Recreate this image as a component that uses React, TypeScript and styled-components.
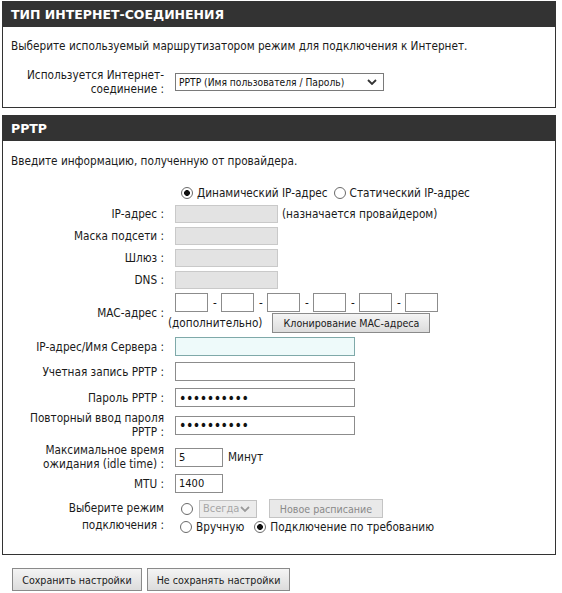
import styled, { createGlobalStyle } from "styled-components";

const GlobalStyle = createGlobalStyle`
  body {
    margin: 0;
    background: #fff;
    font-family: "DejaVu Sans", "Liberation Sans", sans-serif;
    font-stretch: condensed;
    font-size: 11.7px;
    color: #1a1a1a;
  }
`;

const Page = styled.div`
  width: 554px;
  margin: 1px 0 0 2px;
`;

const Section = styled.section<{ $gap?: number }>`
  margin-bottom: ${(p) => p.$gap ?? 0}px;
`;

const SectionTitle = styled.h2`
  margin: 0;
  height: 26px;
  padding-left: 9px;
  background: #333;
  color: #fff;
  font-family: "DejaVu Sans", sans-serif;
  font-stretch: normal;
  font-size: 12.5px;
  font-weight: bold;
  line-height: 27px;
`;

const SectionBody = styled.div<{ $pt: number; $pb: number }>`
  border: 1px solid #333;
  border-top: none;
  padding: ${(p) => p.$pt}px 0 ${(p) => p.$pb}px 0;
`;

const Intro = styled.p<{ $mb: number }>`
  margin: 0 0 ${(p) => p.$mb}px 8px;
  line-height: 14px;
`;

const Row = styled.div<{ $mt?: number }>`
  display: flex;
  align-items: center;
  margin-top: ${(p) => p.$mt ?? 4}px;
  line-height: 14px;
`;

const Label = styled.div<{ $lh?: number }>`
  width: 161px;
  flex: none;
  text-align: right;
  line-height: ${(p) => p.$lh ?? 14}px;
`;

const Field = styled.div<{ $gap?: number }>`
  margin-left: 3px;
  display: flex;
  flex-direction: column;
  gap: ${(p) => p.$gap ?? 0}px;
`;

const Line = styled.div`
  display: flex;
  align-items: center;
`;

const TextInput = styled.input<{ $w: number; $h?: number; $ml?: number; $focus?: boolean }>`
  box-sizing: border-box;
  width: ${(p) => p.$w}px;
  height: ${(p) => p.$h ?? 19}px;
  margin: 0 0 0 ${(p) => p.$ml ?? 8}px;
  padding: 0 3px;
  border: 1px solid ${(p) => (p.$focus ? "#7fa9a9" : "#8c8c8c")};
  border-radius: 0;
  background: ${(p) => (p.$focus ? "#eefafa" : "#fff")};
  font-family: "DejaVu Sans", "Liberation Sans", sans-serif;
  font-stretch: condensed;
  font-size: 11px;
  color: #111;
  outline: none;

  &:disabled {
    background: #e3e3e3;
    border-color: #c9c9c9;
  }

  &[type="password"] {
    font-size: 14px;
    letter-spacing: -0.5px;
  }
`;

const After = styled.span<{ $ml: number }>`
  margin-left: ${(p) => p.$ml}px;
  white-space: nowrap;
`;

const Dash = styled.span`
  width: 6px;
  margin-left: 4px;
  text-align: center;
`;

const SelectWrap = styled.div<{ $w: number; $h: number; $ml: number; $off?: boolean }>`
  position: relative;
  box-sizing: border-box;
  width: ${(p) => p.$w}px;
  height: ${(p) => p.$h}px;
  margin-left: ${(p) => p.$ml}px;
  border: 1px solid ${(p) => (p.$off ? "#c2c2c2" : "#7a7a7a")};
  background: ${(p) => (p.$off ? "#ececec" : "#fff")};
  color: ${(p) => (p.$off ? "#8a8a8a" : "#111")};

  svg {
    position: absolute;
    right: 6px;
    top: 50%;
    transform: translateY(-50%);
  }
`;

const Select = styled.select<{ $fs?: number }>`
  appearance: none;
  width: 100%;
  height: 100%;
  border: none;
  background: transparent;
  padding: 0 0 0 3px;
  font-family: "DejaVu Sans", "Liberation Sans", sans-serif;
  font-stretch: condensed;
  font-size: ${(p) => p.$fs ?? 10.2}px;
  color: inherit;
  outline: none;
`;

const Button = styled.button<{ $w: number; $h?: number; $ml?: number; $off?: boolean }>`
  box-sizing: border-box;
  width: ${(p) => p.$w}px;
  height: ${(p) => p.$h ?? 20}px;
  margin-left: ${(p) => p.$ml ?? 0}px;
  padding: 0;
  border: 1px solid ${(p) => (p.$off ? "#c4c4c4" : "#8a8a8a")};
  border-radius: 0;
  background: ${(p) =>
    p.$off ? "#e9e9e9" : "linear-gradient(#f4f4f4, #dcdcdc)"};
  color: ${(p) => (p.$off ? "#8a8a8a" : "#1a1a1a")};
  font-family: "DejaVu Sans", "Liberation Sans", sans-serif;
  font-stretch: condensed;
  font-size: 10.6px;
`;

const Radio = styled.input.attrs({ type: "radio" })<{ $ml?: number }>`
  appearance: none;
  box-sizing: border-box;
  width: 12px;
  height: 12px;
  margin: 0 4px 0 ${(p) => p.$ml ?? 0}px;
  border: 1px solid #6a6a6a;
  border-radius: 50%;
  background: #fff;
  flex: none;

  &:checked {
    background: radial-gradient(circle, #111 0 2.6px, #fff 3.2px);
  }
`;

const Footer = styled.div`
  display: flex;
  gap: 5px;
  margin: 13px 0 0 10px;
`;

const Chevron = ({ color }: { color: string }) => (
  <svg width="10" height="7" viewBox="0 0 10 7">
    <path d="M1 1.5 L5 5.5 L9 1.5" fill="none" stroke={color} strokeWidth="1.8" />
  </svg>
);

const macBoxes = [0, 1, 2, 3, 4, 5];

const App: React.FC = () => {
  return (
    <Page>
      <GlobalStyle />
      <Section $gap={7}>
        <SectionTitle>ТИП ИНТЕРНЕТ-СОЕДИНЕНИЯ</SectionTitle>
        <SectionBody $pt={12} $pb={11}>
          <Intro $mb={15}>
            Выберите используемый маршрутизатором режим для подключения к Интернет.
          </Intro>
          <Row $mt={0}>
            <Label>
              Используется Интернет-
              <br />
              соединение :
            </Label>
            <Field>
              <SelectWrap $w={209} $h={18} $ml={8}>
                <Select defaultValue="pptp">
                  <option value="pptp">PPTP (Имя пользователя / Пароль)</option>
                </Select>
                <Chevron color="#333" />
              </SelectWrap>
            </Field>
          </Row>
        </SectionBody>
      </Section>

      <Section>
        <SectionTitle>PPTP</SectionTitle>
        <SectionBody $pt={13} $pb={20}>
          <Intro $mb={18}>Введите информацию, полученную от провайдера.</Intro>
          <Row $mt={0}>
            <Label />
            <Field>
              <Line>
                <Radio name="iptype" defaultChecked $ml={14} />
                Динамический IP-адрес
                <Radio name="iptype" $ml={6} />
                Статический IP-адрес
              </Line>
            </Field>
          </Row>
          <Row $mt={5}>
            <Label>IP-адрес :</Label>
            <Field>
              <Line>
                <TextInput $w={103} $h={18} disabled />
                <After $ml={4}>(назначается провайдером)</After>
              </Line>
            </Field>
          </Row>
          <Row>
            <Label>Маска подсети :</Label>
            <Field>
              <TextInput $w={103} $h={18} disabled />
            </Field>
          </Row>
          <Row>
            <Label>Шлюз :</Label>
            <Field>
              <TextInput $w={103} $h={18} disabled />
            </Field>
          </Row>
          <Row>
            <Label>DNS :</Label>
            <Field>
              <TextInput $w={103} $h={18} disabled />
            </Field>
          </Row>
          <Row>
            <Label>MAC-адрес :</Label>
            <Field $gap={1}>
              <Line>
                {macBoxes.map((i) => (
                  <Line key={i}>
                    {i > 0 && <Dash>-</Dash>}
                    <TextInput $w={33} $h={19} $ml={i > 0 ? 3 : 8} />
                  </Line>
                ))}
              </Line>
              <Line>
                <After $ml={1}>(дополнительно)</After>
                <Button $w={158} $h={20} $ml={10}>
                  Клонирование MAC-адреса
                </Button>
              </Line>
            </Field>
          </Row>
          <Row>
            <Label>IP-адрес/Имя Сервера :</Label>
            <Field>
              <TextInput $w={180} $focus />
            </Field>
          </Row>
          <Row $mt={6}>
            <Label>Учетная запись PPTP :</Label>
            <Field>
              <TextInput $w={180} />
            </Field>
          </Row>
          <Row $mt={7}>
            <Label>Пароль PPTP :</Label>
            <Field>
              <TextInput $w={180} type="password" defaultValue="0123456789" />
            </Field>
          </Row>
          <Row>
            <Label>
              Повторный ввод пароля
              <br />
              PPTP :
            </Label>
            <Field>
              <TextInput $w={180} type="password" defaultValue="0123456789" />
            </Field>
          </Row>
          <Row>
            <Label>
              Максимальное время
              <br />
              ожидания (idle time) :
            </Label>
            <Field>
              <Line>
                <TextInput $w={48} defaultValue="5" />
                <After $ml={5}>Минут</After>
              </Line>
            </Field>
          </Row>
          <Row $mt={3}>
            <Label>MTU :</Label>
            <Field>
              <TextInput $w={48} defaultValue="1400" />
            </Field>
          </Row>
          <Row $mt={6}>
            <Label $lh={17}>
              Выберите режим
              <br />
              подключения :
            </Label>
            <Field $gap={2}>
              <Line>
                <Radio name="mode" $ml={14} />
                <SelectWrap $w={58} $h={18} $ml={2} $off>
                  <Select $fs={11} disabled defaultValue="always">
                    <option value="always">Всегда</option>
                  </Select>
                  <Chevron color="#9a9a9a" />
                </SelectWrap>
                <Button $w={114} $h={19} $ml={12} $off disabled>
                  Новое расписание
                </Button>
              </Line>
              <Line>
                <Radio name="mode" $ml={13} />
                Вручную
                <Radio name="mode" defaultChecked $ml={10} />
                Подключение по требованию
              </Line>
            </Field>
          </Row>
        </SectionBody>
      </Section>

      <Footer>
        <Button $w={130} $h={23}>
          Сохранить настройки
        </Button>
        <Button $w={143} $h={23}>
          Не сохранять настройки
        </Button>
      </Footer>
    </Page>
  );
};

export default App;
